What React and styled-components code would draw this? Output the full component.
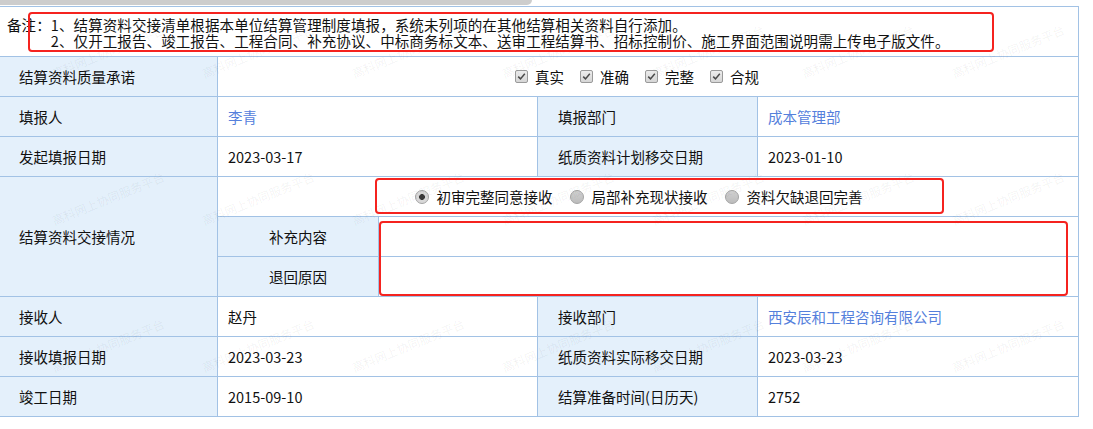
import React from 'react';
import styled, { createGlobalStyle } from 'styled-components';

const GlobalStyle = createGlobalStyle`
  html, body {
    margin: 0;
    padding: 0;
    background: #fff;
  }
  body {
    font-family: "Noto Sans CJK SC", "Liberation Sans", sans-serif;
    font-size: 14.5px;
    color: #111;
  }
`;

const Page = styled.div`
  position: relative;
  width: 1093px;
  height: 429px;
  overflow: hidden;
  background: #fff;
`;

const ScrollBar = styled.div`
  width: 532px;
  height: 5px;
  background: #cdcdcd;
  border-bottom-right-radius: 5px;
  margin-bottom: 1px;
`;

const Sheet = styled.table`
  border-collapse: collapse;
  table-layout: fixed;
  width: 1079px;
  margin-left: -1px;

  td {
    border: 1px solid #a2c2e5;
    padding: 0;
    line-height: 20px;
  }
`;

const Row = styled.tr`
  height: ${p => p.$h || 40}px;
`;

const NoteCell = styled.td`
  padding-left: 7px !important;
`;

const Note = styled.div`
  display: flex;
  line-height: 16px;
  padding-top: 3px;
  letter-spacing: 0.1px;
`;

const NoteLines = styled.div`
  display: flex;
  flex-direction: column;
`;

const Label = styled.td`
  background: #e4f0fb;
  padding-left: ${p => (p.$center ? 0 : p.$pad || 20)}px !important;
  text-align: ${p => (p.$center ? 'center' : 'left')};
`;

const Value = styled.td`
  background: #fff;
  padding-left: 10px !important;
  color: ${p => (p.$link ? '#5580dc' : '#111')};
`;

const Choices = styled.div`
  display: flex;
  justify-content: center;
  align-items: center;
  padding-right: ${p => p.$shift || 0}px;
`;

const Choice = styled.label`
  display: flex;
  align-items: center;
  margin-right: ${p => p.$gap}px;
  white-space: nowrap;
`;

const Box = styled.span`
  width: 13px;
  height: 13px;
  box-sizing: border-box;
  border: 1px solid #9a9a9a;
  border-radius: 2px;
  background: linear-gradient(#ececec, #d6d6d6);
  margin-right: 7px;
  display: flex;
  align-items: center;
  justify-content: center;
`;

const Radio = styled.span`
  width: 14px;
  height: 14px;
  box-sizing: border-box;
  border-radius: 50%;
  border: 1px solid #a5a5a5;
  background: ${p => (p.$on ? 'radial-gradient(circle, #3a3a3a 0 2.6px, #d8d8d8 3.2px)' : 'linear-gradient(#d0d0d0, #bcbcbc)')};
  margin-right: 8px;
`;

const Mark = styled.div`
  position: absolute;
  box-sizing: border-box;
  border: 2.5px solid #f5231f;
  border-radius: 4px;
  pointer-events: none;
`;

const Watermarks = styled.div`
  position: absolute;
  inset: 0;
  pointer-events: none;
`;

const Stamp = styled.span`
  position: absolute;
  font-size: 12px;
  color: rgba(0, 0, 0, 0.06);
  white-space: nowrap;
  transform: translate(-50%, -50%) rotate(-22deg);
`;

const Check = () => (
  <svg width="9" height="9" viewBox="0 0 9 9">
    <path d="M1.2 4.6 L3.5 6.9 L7.8 1.8" fill="none" stroke="#4a4a4a" strokeWidth="1.5" />
  </svg>
);

const promises = ['真实', '准确', '完整', '合规'];
const options = ['初审完整同意接收', '局部补充现状接收', '资料欠缺退回完善'];

const stamps = [];
[51, 198, 345].forEach(y => {
  for (let x = 108; x < 1100; x += 150) stamps.push({ x, y });
});

const App = () => {
  return (
    <Page>
      <GlobalStyle />
      <ScrollBar />
      <Sheet>
        <colgroup>
          <col style={{ width: 218 }} />
          <col style={{ width: 161 }} />
          <col style={{ width: 159 }} />
          <col style={{ width: 220 }} />
          <col style={{ width: 321 }} />
        </colgroup>
        <tbody>
          <Row $h={50}>
            <NoteCell colSpan={5}>
              <Note>
                <span>备注：</span>
                <NoteLines>
                  <span>1、结算资料交接清单根据本单位结算管理制度填报，系统未列项的在其他结算相关资料自行添加。</span>
                  <span>2、仅开工报告、竣工报告、工程合同、补充协议、中标商务标文本、送审工程结算书、招标控制价、施工界面范围说明需上传电子版文件。</span>
                </NoteLines>
              </Note>
            </NoteCell>
          </Row>
          <Row>
            <Label $pad={19}>结算资料质量承诺</Label>
            <Value colSpan={4}>
              <Choices $shift={16}>
                {promises.map(p => (
                  <Choice key={p} $gap={16}>
                    <Box><Check /></Box>
                    {p}
                  </Choice>
                ))}
              </Choices>
            </Value>
          </Row>
          <Row>
            <Label $pad={19}>填报人</Label>
            <Value colSpan={2} $link>李青</Value>
            <Label>填报部门</Label>
            <Value $link>成本管理部</Value>
          </Row>
          <Row>
            <Label $pad={19}>发起填报日期</Label>
            <Value colSpan={2}>2023-03-17</Value>
            <Label>纸质资料计划移交日期</Label>
            <Value>2023-01-10</Value>
          </Row>
          <Row>
            <Label $pad={19} rowSpan={3}>结算资料交接情况</Label>
            <Value colSpan={4}>
              <Choices $shift={12}>
                {options.map((o, i) => (
                  <Choice key={o} $gap={17}>
                    <Radio $on={i === 0} />
                    {o}
                  </Choice>
                ))}
              </Choices>
            </Value>
          </Row>
          <Row>
            <Label $center>补充内容</Label>
            <Value colSpan={3} />
          </Row>
          <Row>
            <Label $center>退回原因</Label>
            <Value colSpan={3} />
          </Row>
          <Row>
            <Label $pad={19}>接收人</Label>
            <Value colSpan={2}>赵丹</Value>
            <Label>接收部门</Label>
            <Value $link>西安辰和工程咨询有限公司</Value>
          </Row>
          <Row>
            <Label $pad={19}>接收填报日期</Label>
            <Value colSpan={2}>2023-03-23</Value>
            <Label>纸质资料实际移交日期</Label>
            <Value>2023-03-23</Value>
          </Row>
          <Row>
            <Label $pad={19}>竣工日期</Label>
            <Value colSpan={2}>2015-09-10</Value>
            <Label>结算准备时间(日历天)</Label>
            <Value>2752</Value>
          </Row>
        </tbody>
      </Sheet>

      <Watermarks>
        {stamps.map(s => (
          <Stamp key={`${s.x}-${s.y}`} style={{ left: s.x, top: s.y }}>高科网上协同服务平台</Stamp>
        ))}
      </Watermarks>

      <Mark style={{ left: 28, top: 12, width: 966, height: 40 }} />
      <Mark style={{ left: 375, top: 178, width: 569, height: 36 }} />
      <Mark style={{ left: 379, top: 221, width: 689, height: 75 }} />
    </Page>
  );
};

export default App;
